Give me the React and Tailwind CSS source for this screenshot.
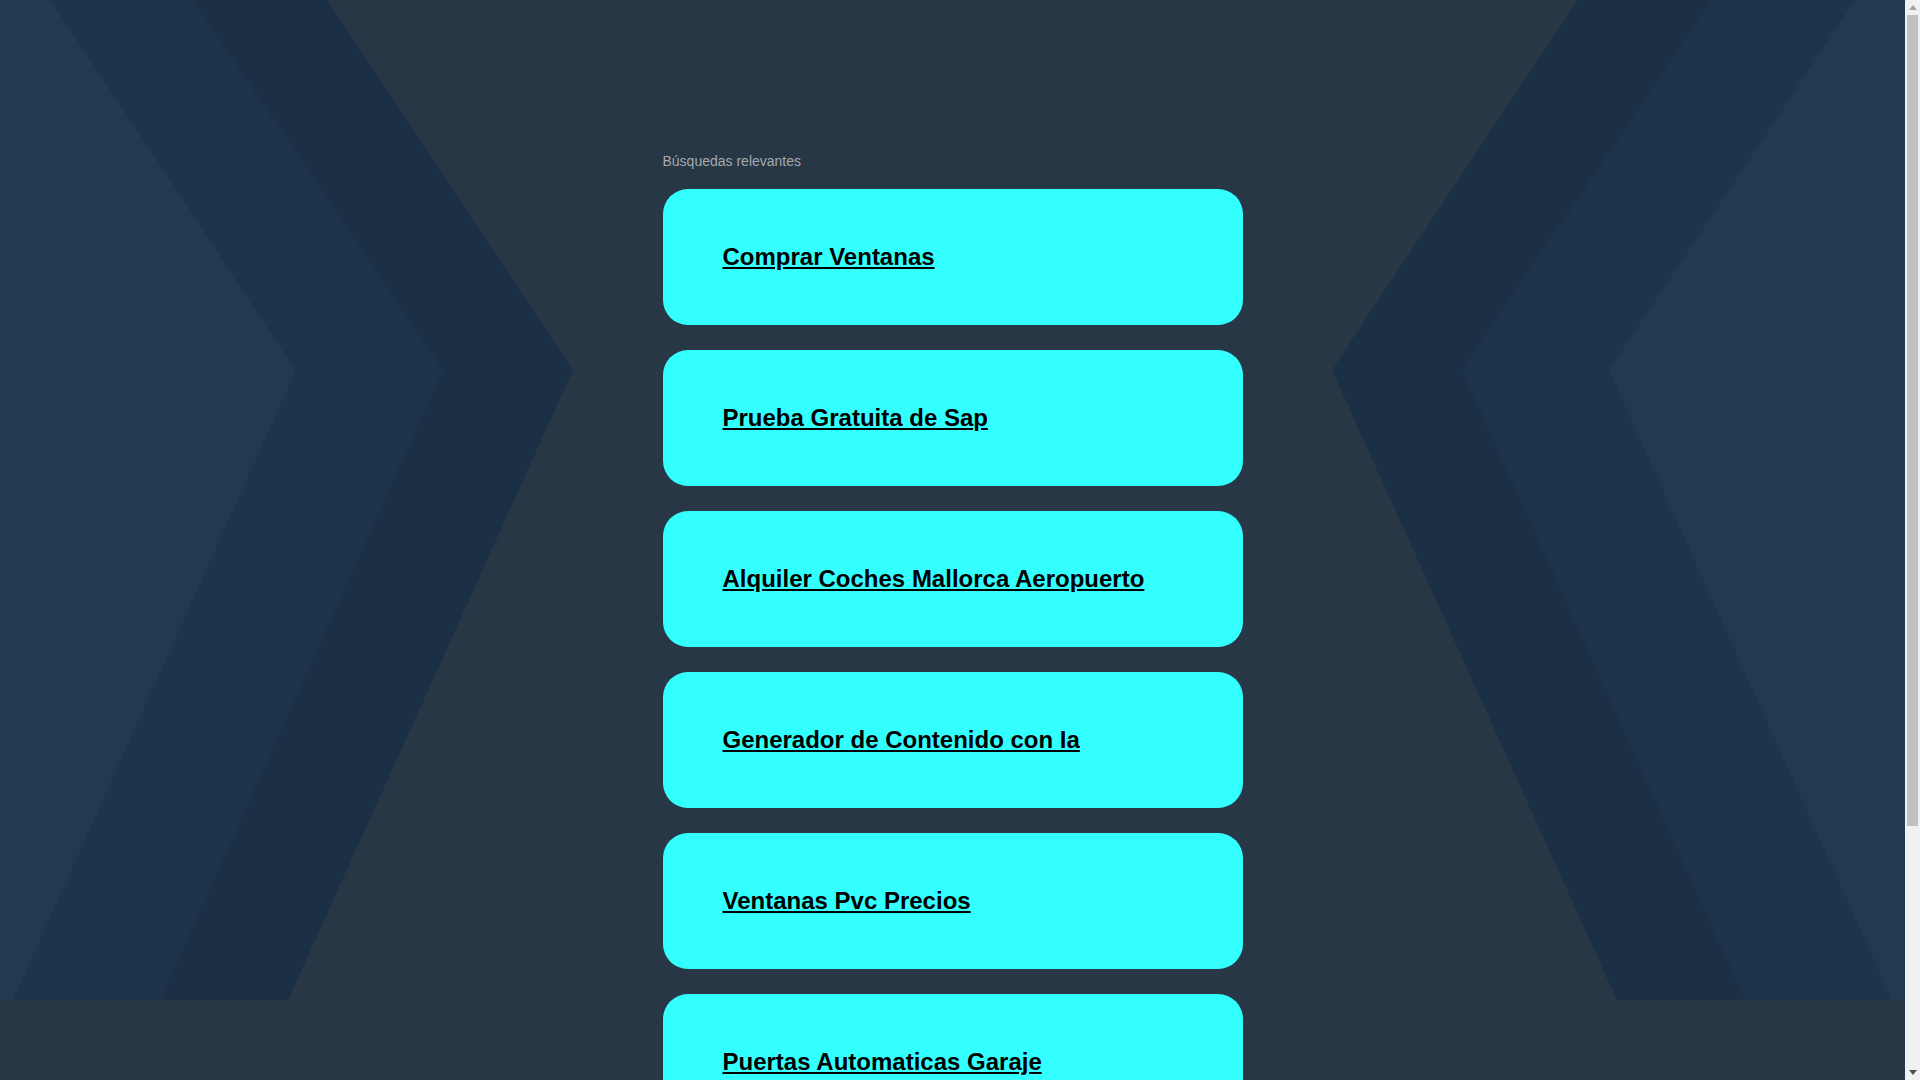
import React from "react";

const links = [
  "Comprar Ventanas",
  "Prueba Gratuita de Sap",
  "Alquiler Coches Mallorca Aeropuerto",
  "Generador de Contenido con Ia",
  "Ventanas Pvc Precios",
  "Puertas Automaticas Garaje",
];

function Backdrop() {
  const W = 1905;
  const m = (pts) => pts.map(([x, y]) => `${W - x},${y}`).join(" ");
  const s = (pts) => pts.map(([x, y]) => `${x},${y}`).join(" ");
  const dark = [[0, 0], [327, 0], [573, 370], [288, 1000], [0, 1000]];
  const mid = [[0, 0], [193, 0], [443, 370], [160, 1000], [0, 1000]];
  const light = [[0, 0], [50, 0], [296, 370], [13, 1000], [0, 1000]];
  return (
    <svg
      className="absolute top-0 left-0 w-full h-[1000px] pointer-events-none"
      viewBox="0 0 1905 1000"
      preserveAspectRatio="none"
    >
      <polygon points={s(dark)} fill="#1b2f45" />
      <polygon points={s(mid)} fill="#1e334c" />
      <polygon points={s(light)} fill="#213a52" />
      <polygon points={m(dark)} fill="#1b2f45" />
      <polygon points={m(mid)} fill="#1e334c" />
      <polygon points={m(light)} fill="#213a52" />
    </svg>
  );
}

function Scrollbar() {
  return (
    <div className="w-[15px] h-screen shrink-0 bg-[#f1f1f1] flex flex-col">
      <div className="h-[15px] flex items-center justify-center">
        <svg width="8" height="5" viewBox="0 0 8 5">
          <polygon points="0,5 4,0 8,5" fill="#a3a3a3" />
        </svg>
      </div>
      <div className="flex-1 px-[2px]">
        <div className="h-[811px] bg-[#c1c1c1]" />
      </div>
      <div className="h-[15px] flex items-center justify-center">
        <svg width="8" height="5" viewBox="0 0 8 5">
          <polygon points="0,0 8,0 4,5" fill="#505050" />
        </svg>
      </div>
    </div>
  );
}

export default function App() {
  return (
    <div
      className="h-screen overflow-hidden flex bg-[#283746]"
      style={{ fontFamily: '"Liberation Sans", Arial, sans-serif' }}
    >
      <div className="relative flex-1 h-screen overflow-hidden">
        <Backdrop />
        <div className="relative z-10 w-[580px] mx-auto pt-[153px] pb-[270px]">
          <div className="text-[14px] leading-[16px] text-[#a3a8ad] mb-[20px]">
            Búsquedas relevantes
          </div>
          <div className="flex flex-col gap-[25px]">
            {links.map((t) => (
              <a
                key={t}
                href="#"
                className="flex items-center h-[136px] rounded-[25px] bg-[#33ffff] px-[60px]"
              >
                <span className="text-[24px] font-bold text-black underline">
                  {t}
                </span>
              </a>
            ))}
          </div>
        </div>
      </div>
      <Scrollbar />
    </div>
  );
}
